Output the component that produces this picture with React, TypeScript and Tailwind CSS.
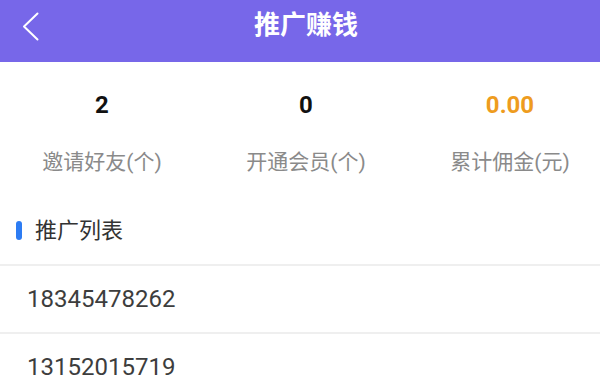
const stats = [
  { value: '2', label: '邀请好友(个)', color: 'text-[#111111]' },
  { value: '0', label: '开通会员(个)', color: 'text-[#111111]' },
  { value: '0.00', label: '累计佣金(元)', color: 'text-[#ee9c1e]' },
]

const phones = ['18345478262', '13152015719']

export default function App() {
  return (
    <div
      className="w-[600px] h-[392px] overflow-hidden bg-white"
      style={{ fontFamily: 'Roboto, "Noto Sans CJK SC", sans-serif' }}
    >
      <div className="w-[612px]">
        {/* Header */}
        <div className="relative h-[62px] bg-[#7767e9]">
          <div className="h-[50px] flex items-center justify-center">
            <h1 className="text-[26px] font-bold text-white leading-none">推广赚钱</h1>
          </div>
          <button className="absolute left-[22px] top-[12px]">
            <svg width="17" height="29" viewBox="0 0 17 29" fill="none">
              <polyline
                points="15.5,1.5 2,14.5 15.5,27.5"
                stroke="white"
                strokeWidth="2"
                strokeLinecap="round"
                strokeLinejoin="round"
              />
            </svg>
          </button>
        </div>

        {/* Stats */}
        <div className="grid grid-cols-3 pt-[29px]">
          {stats.map((s) => (
            <div key={s.label} className="flex flex-col items-center">
              <span className={`text-[24px] font-bold leading-[28px] ${s.color}`}>{s.value}</span>
              <span className="mt-[29px] text-[21px] leading-[28px] text-[#8a8a8a]">{s.label}</span>
            </div>
          ))}
        </div>

        {/* List title */}
        <div className="mt-[34px] h-[40px] flex items-center pl-[16px] gap-[13px]">
          <span className="w-[6px] h-[19px] rounded-full bg-[#2d7cf3]" />
          <span className="text-[22px] text-[#333333]">推广列表</span>
        </div>

        {/* List */}
        <div className="mt-[14px]">
          {phones.map((p) => (
            <div
              key={p}
              className="h-[68px] border-t-2 border-[#efefef] flex items-center pl-[27px] text-[24px] text-[#3d3d3d]"
            >
              {p}
            </div>
          ))}
        </div>
      </div>
    </div>
  )
}
